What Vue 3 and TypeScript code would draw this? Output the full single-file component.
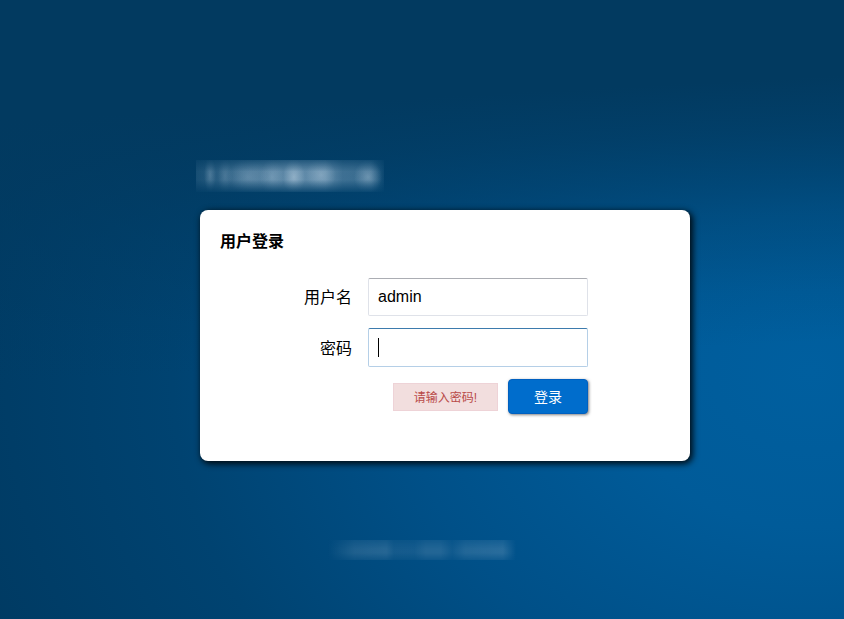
<script setup lang="ts">
import { nextTick, onMounted, ref } from 'vue'

const username = ref('admin')
const password = ref('')
const error = ref('请输入密码!')
const passwordField = ref<HTMLInputElement | null>(null)
const passwordFocused = ref(true)

onMounted(() => passwordField.value?.focus())

async function submit() {
  error.value = !username.value ? '请输入用户名!' : !password.value ? '请输入密码!' : ''
  await nextTick()
  if (!password.value) passwordField.value?.focus()
}
</script>

<template>
  <div class="page">
    <main class="content">
      <div class="brand" aria-hidden="true"></div>
      <form class="card" novalidate @submit.prevent="submit">
        <h1 class="title">用户登录</h1>
        <div class="fields">
          <label class="label" for="username">用户名</label>
          <div class="control">
            <input id="username" v-model="username" class="input" type="text" autocomplete="username" />
          </div>
          <label class="label" for="password">密码</label>
          <div class="control">
            <input
              id="password"
              ref="passwordField"
              v-model="password"
              class="input"
              :class="{ active: passwordFocused, empty: !password }"
              type="password"
              autocomplete="current-password"
              @focus="passwordFocused = true"
              @blur="passwordFocused = false"
            />
            <span v-if="passwordFocused && !password" class="caret" aria-hidden="true"></span>
          </div>
        </div>
        <div class="actions">
          <p v-if="error" class="error" role="alert">{{ error }}</p>
          <button class="submit" type="submit">登录</button>
        </div>
      </form>
    </main>
    <footer class="footer">
      <div class="notice" aria-hidden="true"></div>
    </footer>
  </div>
</template>

<style>
body {
  background: #023a60;
}
</style>

<style scoped>
.page {
  box-sizing: border-box;
  min-height: 100vh;
  padding: 160px 0 58px;
  font-family: "Liberation Sans", "Noto Sans CJK SC", sans-serif;
  font-size: 16px;
  color: #000;
  background:
    linear-gradient(177deg, #023a60 0%, #023a60 18%, rgba(2, 58, 96, 0.8) 26%, rgba(2, 58, 96, 0.42) 38%, rgba(2, 58, 96, 0.12) 50%, rgba(2, 58, 96, 0) 58%),
    radial-gradient(ellipse 105% 115% at 96% 60%, #005f9f 0%, #005b99 22%, #005088 46%, #004371 72%, #003a62 100%);
}

.content {
  display: grid;
  grid-template-columns: 200fr minmax(0, 490px) 154fr;
}

.brand {
  grid-column: 2;
  justify-self: start;
  width: 188px;
  height: 32px;
  margin-left: -4px;
  background:
    radial-gradient(ellipse 11px 18px at 98px 17px, rgba(215, 230, 242, 0.4), transparent),
    radial-gradient(ellipse 15px 17px at 125px 15px, rgba(215, 230, 242, 0.28), transparent),
    radial-gradient(ellipse 14px 17px at 172px 17px, rgba(215, 230, 242, 0.32), transparent),
    radial-gradient(ellipse 6px 18px at 14px 15px, rgba(205, 224, 240, 0.24), transparent),
    radial-gradient(ellipse 7px 18px at 29px 16px, rgba(205, 224, 240, 0.16), transparent),
    radial-gradient(ellipse 20px 18px at 52px 17px, rgba(205, 224, 240, 0.2), transparent),
    radial-gradient(ellipse 12px 18px at 76px 17px, rgba(205, 224, 240, 0.24), transparent),
    linear-gradient(90deg, rgba(180, 208, 230, 0.12), rgba(180, 208, 230, 0.34) 24%, rgba(190, 214, 234, 0.5) 50%, rgba(190, 214, 234, 0.5) 69%, rgba(180, 208, 230, 0.34) 78%, rgba(180, 208, 230, 0.3) 93%, rgba(180, 208, 230, 0.06));
  mask-image: linear-gradient(rgba(0, 0, 0, 0.35), #000 36%, #000 62%, rgba(0, 0, 0, 0.15));
}

.card {
  grid-column: 2;
  box-sizing: border-box;
  margin-top: 18px;
  padding: 20px 20px 47px;
  border-radius: 8px;
  background: #fff;
  box-shadow: 2px 2px 6px 1px rgba(0, 0, 0, 0.85);
}

.title {
  margin: 0 0 24px;
  font-size: 16px;
  line-height: 24px;
}

.fields {
  display: grid;
  grid-template-columns: 132px minmax(0, 220px);
  gap: 12px 16px;
  align-items: center;
}

.label {
  padding-top: 2px;
  text-align: right;
  line-height: 24px;
}

.control {
  position: relative;
}

.input {
  display: block;
  box-sizing: border-box;
  width: 100%;
  height: 38px;
  padding: 0 9px;
  border: 1px solid #dfe2e9;
  border-top-color: #abadb3;
  border-radius: 2px;
  outline: none;
  background: #fff;
  font: inherit;
  color: #000;
}

.input.active {
  height: 39px;
  border-color: #b5cfe7;
  border-top-color: #3d7bad;
}

.input.active.empty {
  caret-color: transparent;
}

.caret {
  position: absolute;
  top: 10px;
  left: 10px;
  width: 1px;
  height: 19px;
  background: #000;
  pointer-events: none;
}

.actions {
  display: flex;
  justify-content: flex-end;
  align-items: center;
  gap: 10px;
  max-width: 368px;
  margin-top: 12px;
}

.error {
  box-sizing: border-box;
  height: 28px;
  margin: 0;
  padding: 0 20px;
  border: 1px solid #eed3d7;
  background: #f2dede;
  font-size: 12px;
  line-height: 28px;
  color: #b94a48;
}

.submit {
  box-sizing: border-box;
  width: 80px;
  height: 35px;
  padding: 0 0 2px;
  border: 1px solid #0060c0;
  border-radius: 4px;
  background: #006dcc;
  box-shadow: 1px 1px 3px rgba(0, 0, 0, 0.5);
  font: inherit;
  font-size: 14px;
  color: #fff;
  cursor: pointer;
}

.footer {
  display: flex;
  justify-content: center;
  margin-top: 79px;
}

.notice {
  width: 188px;
  height: 20px;
  background: linear-gradient(90deg, transparent, rgba(170, 195, 215, 0.18) 14%, rgba(170, 195, 215, 0.22) 31%, rgba(170, 195, 215, 0.12) 35%, rgba(170, 195, 215, 0.12) 46%, rgba(170, 195, 215, 0.2) 52%, rgba(170, 195, 215, 0.2) 60%, rgba(170, 195, 215, 0.09) 66%, rgba(170, 195, 215, 0.2) 73%, rgba(170, 195, 215, 0.24) 93%, transparent);
  mask-image: linear-gradient(rgba(0, 0, 0, 0.5), #000 45%, #000 65%, rgba(0, 0, 0, 0.4));
}
</style>
